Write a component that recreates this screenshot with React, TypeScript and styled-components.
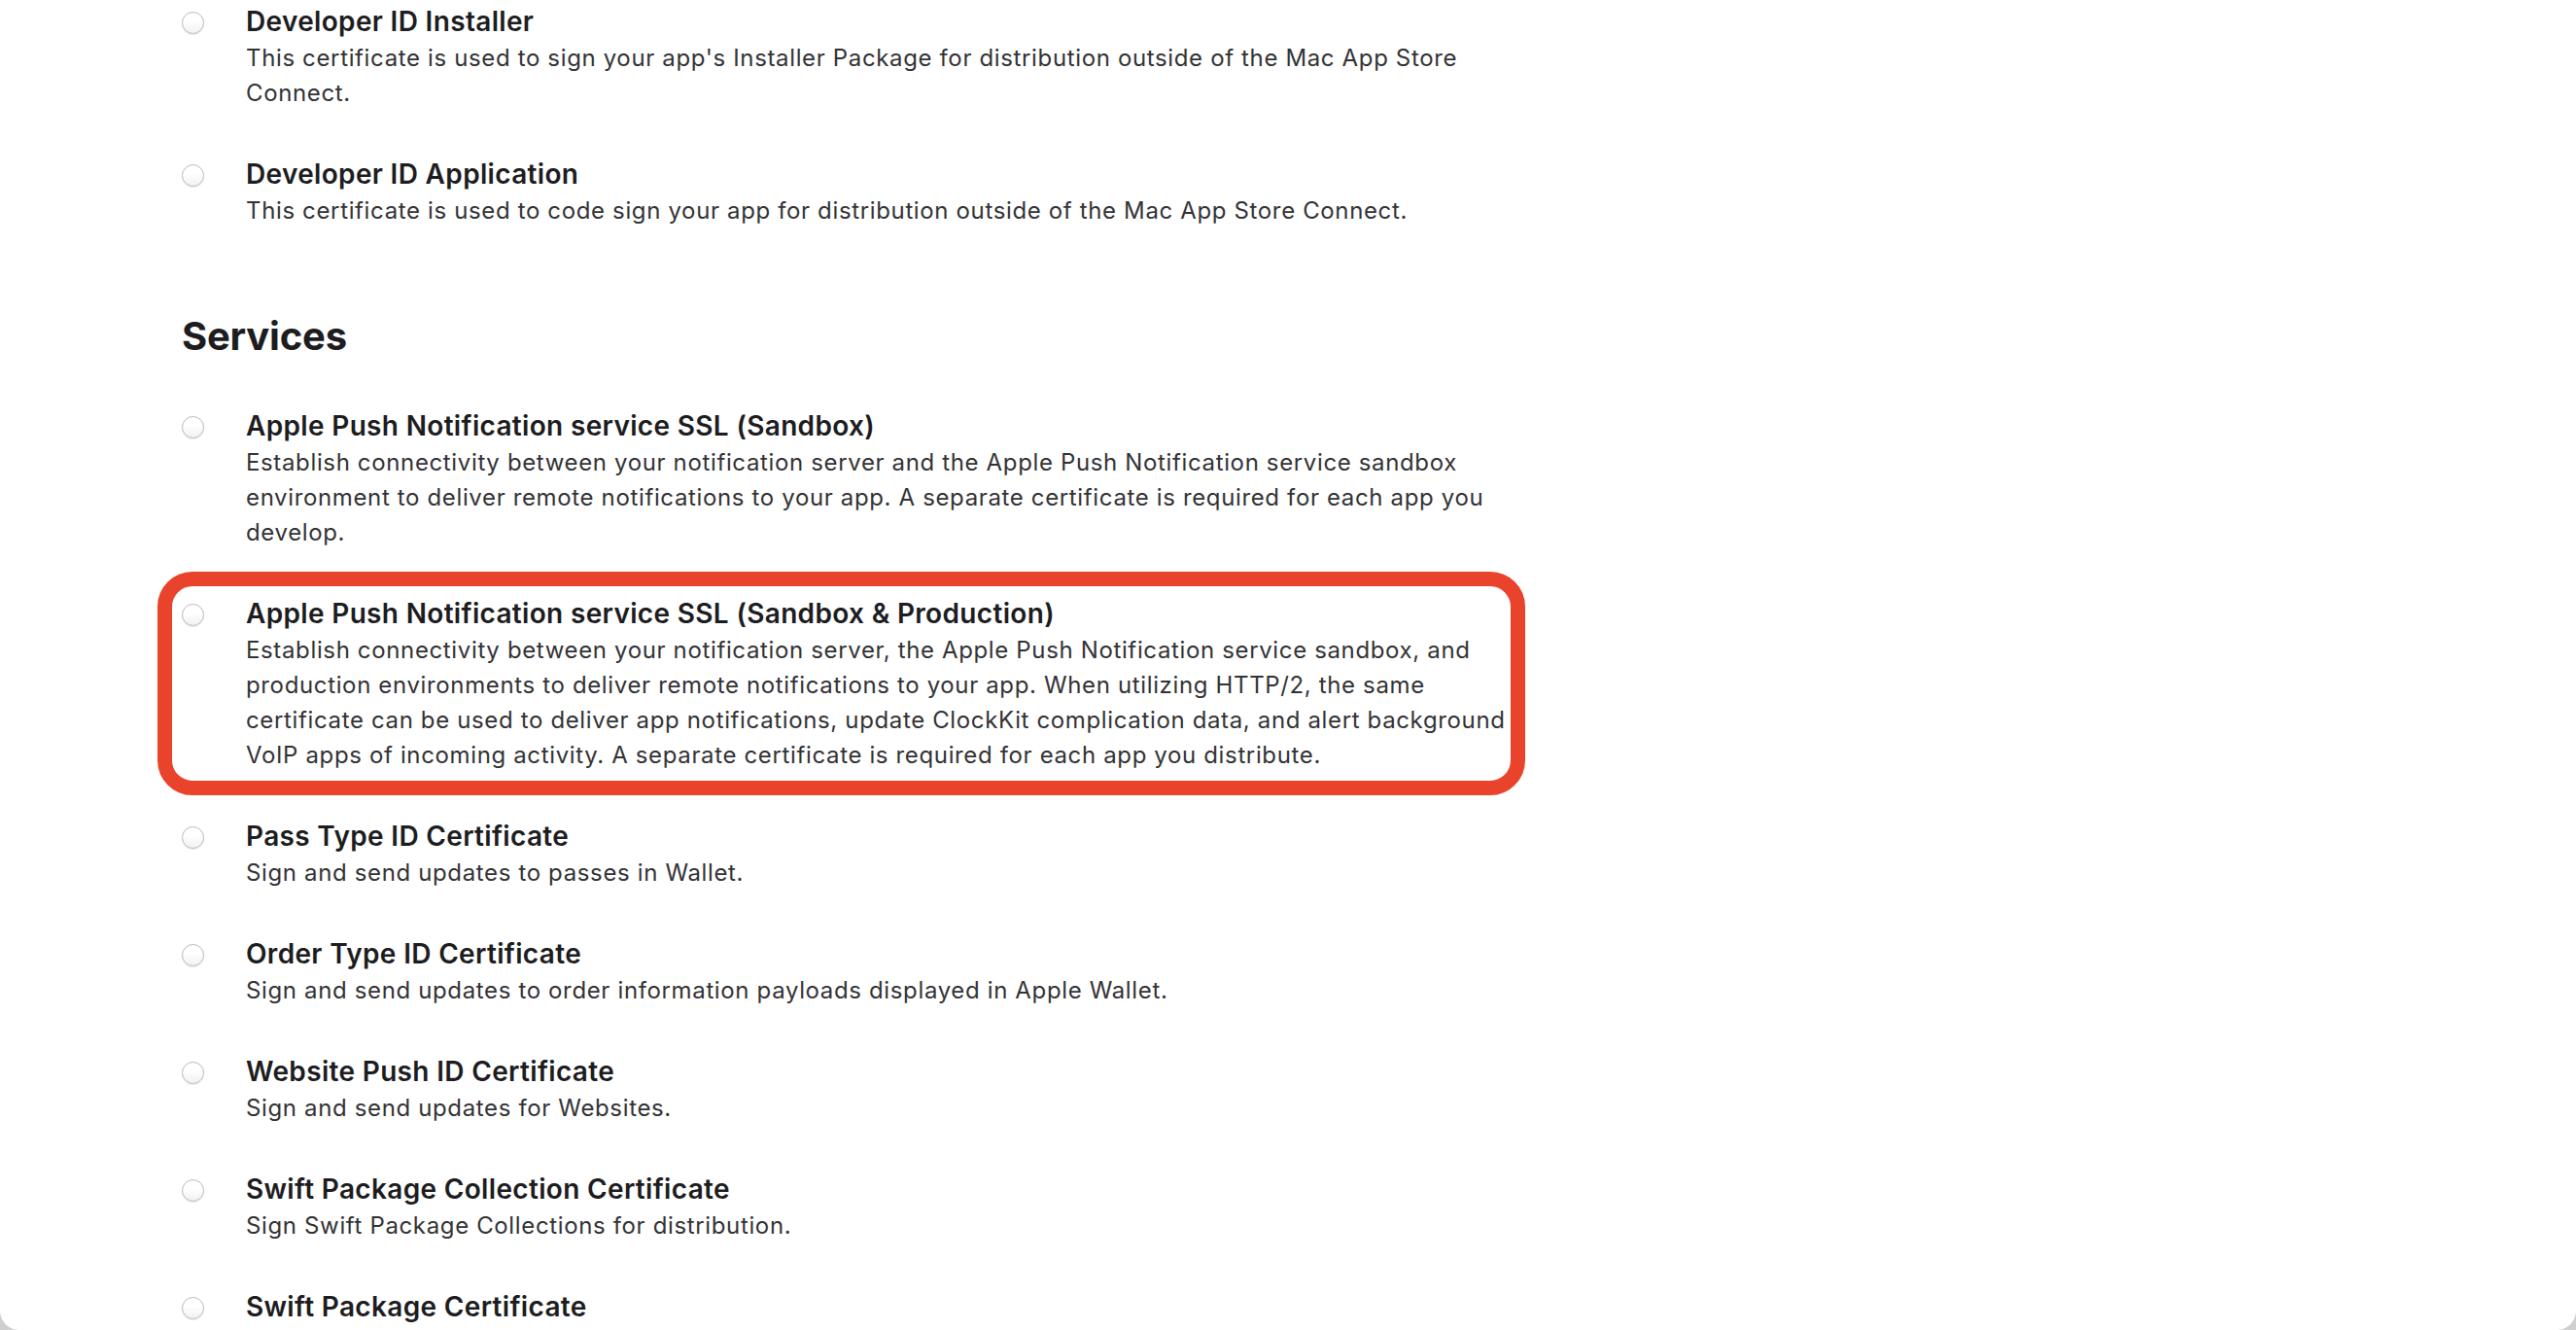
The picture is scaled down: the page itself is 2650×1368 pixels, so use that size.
import React from "react";
import styled, {createGlobalStyle} from "styled-components";

const GlobalStyle = createGlobalStyle`
  html, body {
    margin: 0;
    padding: 0;
    background: #cfcfcf;
  }

  body {
    font-family: Inter, "Noto Sans", "Liberation Sans", sans-serif;
    -webkit-font-smoothing: antialiased;
  }
`;

const Window = styled.div`
  height: 1368px;
  overflow: hidden;
  background: #ffffff;
  border-radius: 0 0 20px 20px;
  box-sizing: border-box;
  padding: 4px 0 0 187px;
`;

const Section = styled.section`
  display: flex;
  flex-direction: column;
  align-items: flex-start;
  gap: 47px;
`;

const Heading = styled.h2`
  margin: 87px 0 50px 0;
  font-size: 40px;
  line-height: 48px;
  font-weight: 700;
  color: #1d1d1f;
  letter-spacing: -0.2px;
`;

const Item = styled.div`
  position: relative;
  display: grid;
  grid-template-columns: 22px 1306px;
  column-gap: 44px;
  align-items: start;
`;

const Highlight = styled.span`
  position: absolute;
  top: -25px;
  left: -25px;
  right: -10px;
  bottom: -23px;
  border: 15px solid #e9432b;
  border-radius: 36px;
  pointer-events: none;
`;

const Radio = styled.span`
  display: block;
  width: 23px;
  height: 23px;
  margin-top: 8px;
  box-sizing: border-box;
  border-radius: 50%;
  border: 1px solid #b9b9b9;
  background: linear-gradient(#ffffff 40%, #f1f1f1);
  box-shadow: 0 1px 1px rgba(0, 0, 0, 0.08);
`;

const Body = styled.div`
  display: flex;
  flex-direction: column;
`;

const Title = styled.span`
  font-size: 28px;
  line-height: 36px;
  font-weight: 600;
  color: #1d1d1f;
  letter-spacing: 0.33px;
`;

const Description = styled.p`
  margin: 2px 0 0 0;
  font-size: 24px;
  line-height: 36px;
  color: #333336;
  letter-spacing: 0.64px;
`;

type Cert = {
  title: string;
  text: string;
  highlight?: boolean;
};

const software: Cert[] = [
  {
    title: "Developer ID Installer",
    text: "This certificate is used to sign your app's Installer Package for distribution outside of the Mac App Store Connect.",
  },
  {
    title: "Developer ID Application",
    text: "This certificate is used to code sign your app for distribution outside of the Mac App Store Connect.",
  },
];

const services: Cert[] = [
  {
    title: "Apple Push Notification service SSL (Sandbox)",
    text: "Establish connectivity between your notification server and the Apple Push Notification service sandbox environment to deliver remote notifications to your app. A separate certificate is required for each app you develop.",
  },
  {
    title: "Apple Push Notification service SSL (Sandbox & Production)",
    text: "Establish connectivity between your notification server, the Apple Push Notification service sandbox, and production environments to deliver remote notifications to your app. When utilizing HTTP/2, the same certificate can be used to deliver app notifications, update ClockKit complication data, and alert background VoIP apps of incoming activity. A separate certificate is required for each app you distribute.",
    highlight: true,
  },
  {
    title: "Pass Type ID Certificate",
    text: "Sign and send updates to passes in Wallet.",
  },
  {
    title: "Order Type ID Certificate",
    text: "Sign and send updates to order information payloads displayed in Apple Wallet.",
  },
  {
    title: "Website Push ID Certificate",
    text: "Sign and send updates for Websites.",
  },
  {
    title: "Swift Package Collection Certificate",
    text: "Sign Swift Package Collections for distribution.",
  },
  {
    title: "Swift Package Certificate",
    text: "Sign Swift Packages for distribution.",
  },
];

const CertRow: React.FC<Cert> = ({title, text, highlight}) => (
  <Item>
    <Radio />
    <Body>
      <Title>{title}</Title>
      <Description>{text}</Description>
    </Body>
    {highlight && <Highlight />}
  </Item>
);

const App: React.FC = () => {
  return (
    <>
      <GlobalStyle />
      <Window>
        <Section>
          {software.map((c) => (
            <CertRow key={c.title} {...c} />
          ))}
        </Section>
        <Heading>Services</Heading>
        <Section>
          {services.map((c) => (
            <CertRow key={c.title} {...c} />
          ))}
        </Section>
      </Window>
    </>
  );
};

export default App;
